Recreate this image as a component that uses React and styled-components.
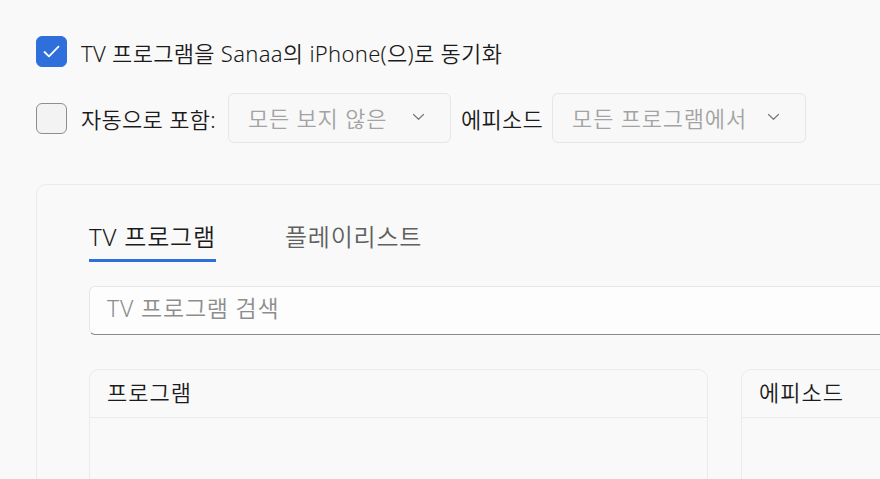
import React from "react";
import styled, { createGlobalStyle } from "styled-components";

const Global = createGlobalStyle`
  html, body { margin: 0; padding: 0; background: #f9f9f9; overflow: hidden; }
  body { font-family: "Segoe UI", "Noto Sans", "Noto Sans CJK KR", sans-serif; color: #1b1b1b; font-weight: 350; }
  * { box-sizing: border-box; }
`;

const Page = styled.div`
  width: 880px;
  height: 479px;
  padding: 36px 0 0 36px;
  overflow: hidden;
`;

const Row = styled.div`
  display: flex;
  align-items: center;
  gap: ${(p) => p.$gap || 14}px;
  height: ${(p) => p.$h}px;
  margin-top: ${(p) => p.$mt || 0}px;
`;

const Box = styled.span`
  width: 31px;
  height: 31px;
  flex: none;
  border-radius: 6px;
  display: flex;
  align-items: center;
  justify-content: center;
  background: ${(p) => (p.$checked ? "#2f6fdc" : "#f3f3f3")};
  border: 1px solid ${(p) => (p.$checked ? "#2f6fdc" : "#8e8e8e")};
  margin-right: ${(p) => p.$mr || 0}px;
`;

const Label = styled.span`
  font-size: 22px;
  color: #1b1b1b;
  white-space: nowrap;
  letter-spacing: 0.3px;
  margin-left: ${(p) => p.$ml || 0}px;
`;

const Select = styled.div`
  height: 50px;
  width: ${(p) => p.$w}px;
  border: 1px solid #e6e6e6;
  border-radius: 6px;
  background: #f8f8f8;
  display: flex;
  align-items: center;
  justify-content: space-between;
  padding: 0 25px 2px 19px;
  margin-left: ${(p) => p.$ml || 0}px;
  font-size: 22px;
  letter-spacing: 0.8px;
  color: #a3a3a3;
  white-space: nowrap;
`;

const Panel = styled.div`
  margin-top: 41px;
  width: 900px;
  height: 320px;
  border: 1px solid #ebebeb;
  border-radius: 10px;
  background: #f9f9f9;
  padding: 35px 0 0 52px;
`;

const Tabs = styled.div`
  display: flex;
  gap: 69px;
`;

const Tab = styled.div`
  font-size: 24px;
  letter-spacing: 0.8px;
  color: ${(p) => (p.$active ? "#1b1b1b" : "#606060")};
  padding-bottom: 5px;
  border-bottom: 3px solid ${(p) => (p.$active ? "#2f6fdc" : "transparent")};
  line-height: 34px;
  white-space: nowrap;
`;

const Search = styled.div`
  margin-top: 24px;
  height: 49px;
  width: 900px;
  background: #fdfdfd;
  border: 1px solid #e6e6e6;
  border-bottom: 1.5px solid #8a8a8a;
  border-radius: 6px;
  display: flex;
  align-items: center;
  padding: 0 0 5px 17px;
  font-size: 23px;
  line-height: 1;
  letter-spacing: 0.8px;
  color: #8d8d8d;
`;

const Lists = styled.div`
  margin-top: 34px;
  display: grid;
  grid-template-columns: 619px 400px;
  gap: 33px;
`;

const ListBox = styled.div`
  height: 140px;
  border: 1px solid #ebebeb;
  border-radius: 10px;
  background: #f9f9f9;
`;

const ListHead = styled.div`
  height: 48px;
  border-bottom: 1px solid #ebebeb;
  display: flex;
  align-items: center;
  padding: 0 0 4px 17px;
  font-size: 22px;
  line-height: 1;
  letter-spacing: 1px;
  color: #1b1b1b;
`;

const Chevron = () => (
  <svg width="13" height="8" viewBox="0 0 13 8" fill="none">
    <path d="M1.5 1.5 L6.5 6.3 L11.5 1.5" stroke="#7a7a7a" strokeWidth="1.2" strokeLinecap="round" strokeLinejoin="round" />
  </svg>
);

const Check = () => (
  <svg width="17" height="13" viewBox="0 0 17 13" fill="none">
    <path d="M1.5 7 L6 11.3 L15.5 1.7" stroke="#ffffff" strokeWidth="1.8" strokeLinecap="round" strokeLinejoin="round" />
  </svg>
);

export default function App() {
  return (
    <>
      <Global />
      <Page>
        <Row $h={31}>
          <Box $checked>
            <Check />
          </Box>
          <Label>TV 프로그램을 Sanaa의 iPhone(으)로 동기화</Label>
        </Row>
        <Row $h={50} $mt={26} $gap={9}>
          <Box $mr={5} />
          <Label>자동으로 포함:</Label>
          <Select $w={223} $ml={3}>
            <span>모든 보지 않은</span>
            <Chevron />
          </Select>
          <Label $ml={1}>에피소드</Label>
          <Select $w={254}>
            <span>모든 프로그램에서</span>
            <Chevron />
          </Select>
        </Row>
        <Panel>
          <Tabs>
            <Tab $active>TV 프로그램</Tab>
            <Tab>플레이리스트</Tab>
          </Tabs>
          <Search>TV 프로그램 검색</Search>
          <Lists>
            <ListBox>
              <ListHead>프로그램</ListHead>
            </ListBox>
            <ListBox>
              <ListHead>에피소드</ListHead>
            </ListBox>
          </Lists>
        </Panel>
      </Page>
    </>
  );
}
